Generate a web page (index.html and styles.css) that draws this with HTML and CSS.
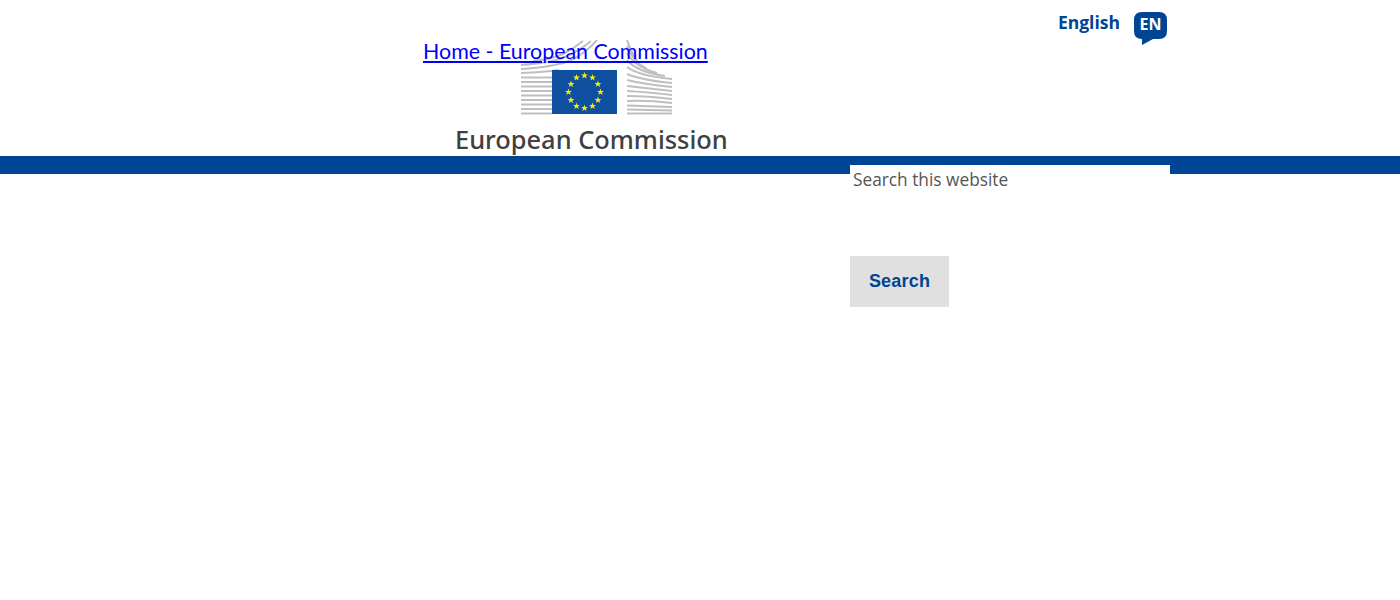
FILE: index.html
```html
<!DOCTYPE html>
<html lang="en">

<head>
    <meta charset="UTF-8">
    <meta name="viewport" content="width=device-width, initial-scale=1.0">
    <title>European Commission</title>
    <link rel="stylesheet" href="styles.css">
</head>

<body>
    <header class="head">
        <div class="brand">
            <a class="homeLink" href="#">Home - European Commission</a>
            <svg class="logo" width="310" height="76" viewBox="0 0 310 76">
                <defs>
                    <polygon id="star" points="0,-3.6 .85,-1.1 3.5,-1.1 1.4,.5 2.2,3 0,1.5 -2.2,3 -1.4,.5 -3.5,-1.1 -.85,-1.1" fill="#ffed00" />
                </defs>
                <g class="lines">
                    <path d="M98 73.500H129M98 69H129M98 64.500H129M98 60H129M98 55.500H129M98 51H129M98 46.500H129M98 42H129M98 37.500H129" />
                    <path d="M98 33Q122 32 136 30M98 29Q130 27 146 21Q162 14 174 0M98 25Q128 23 142 17Q156 11 168 1M110 21Q130 19 140 14Q150 9 160 1" />
                    <path d="M204 73.500H249M204 69.500L249 70.500M204 65.500L249 67M204 61Q225 60 249 63M204 56Q225 56 249 59M204 51Q224 52 249 55M204 46Q222 48 249 51M204 40Q220 44 249 47M204 34Q218 40 249 43M204 27Q216 36 249 39M204 20Q214 32 242 36M204 13Q212 27 234 33M204 6Q210 22 224 29M204 0Q208 12 216 24" />
                </g>
                <rect class="flag" x="129" y="30" width="65" height="44" />
                <use href="#star" x="161.500" y="35.500" />
                <use href="#star" x="169.500" y="37.500" />
                <use href="#star" x="175" y="44" />
                <use href="#star" x="177.500" y="52" />
                <use href="#star" x="175" y="60" />
                <use href="#star" x="169.500" y="66" />
                <use href="#star" x="161.500" y="68" />
                <use href="#star" x="153.500" y="66" />
                <use href="#star" x="148" y="60" />
                <use href="#star" x="145.500" y="52" />
                <use href="#star" x="148" y="44" />
                <use href="#star" x="153.500" y="37.500" />
            </svg>
            <div class="brandName">European Commission</div>
        </div>
        <div class="lang">
            <span class="langName">English</span>
            <svg class="langIcon" width="33" height="33" viewBox="0 0 33 33">
                <path d="M8 0H25Q33 0 33 8V19Q33 27 25 27H19L8 33V27Q0 27 0 19V8Q0 0 8 0Z" fill="#004494" />
                <text x="16.500" y="18" text-anchor="middle">EN</text>
            </svg>
        </div>
    </header>

    <div class="bar"></div>

    <div class="wrap">
        <form class="search">
            <input type="text" class="searchInput" placeholder="Search this website">
            <input type="submit" class="searchBtn" value="Search">
        </form>
    </div>
</body>

</html>
```

FILE: styles.css
```css
body {
    margin: 0;
    background: #fff;
}

.head {
    width: 940px;
    height: 156px;
    margin: 0 auto;
    display: flex;
    justify-content: space-between;
}

.brand {
    position: relative;
    margin-left: 193px;
    padding-top: 40px;
}

.homeLink {
    position: absolute;
    top: 37px;
    left: 0;
    font-family: "Lato", sans-serif;
    font-size: 21.400px;
    line-height: 28px;
    color: #00f;
    white-space: nowrap;
}

.logo {
    display: block;
}

.lines path {
    fill: none;
    stroke: #bfbfbf;
    stroke-width: 2;
}

.flag {
    fill: #0e4f9f;
}

.brandName {
    margin: 7px 0 0 32px;
    font-family: "Noto Sans", sans-serif;
    font-size: 25.400px;
    font-weight: 500;
    line-height: 32px;
    color: #404040;
    white-space: nowrap;
}

.lang {
    display: flex;
    align-items: flex-start;
    gap: 14px;
    padding: 11px 3px 0 0;
}

.langName {
    font-family: "Open Sans", sans-serif;
    font-size: 17.500px;
    font-weight: 700;
    line-height: 22px;
    color: #004494;
}

.langIcon {
    margin-top: 1px;
}

.langIcon text {
    font-family: "Open Sans", sans-serif;
    font-size: 16px;
    font-weight: 700;
    fill: #fff;
}

.bar {
    height: 18px;
    background: #004494;
}

.wrap {
    width: 940px;
    margin: 0 auto;
}

.search {
    width: 320px;
    margin: -9px 0 0 auto;
    display: flex;
    flex-direction: column;
    align-items: flex-start;
    gap: 61px;
}

.searchInput {
    box-sizing: border-box;
    width: 320px;
    height: 30px;
    padding: 0 3px 2px;
    border: none;
    background: #fff;
    font-family: "Open Sans", sans-serif;
    font-size: 17.300px;
    color: #555;
}

.searchInput::placeholder {
    color: #555;
    opacity: 1;
}

.searchBtn {
    width: 99px;
    height: 51px;
    border: none;
    background: #e0e0e0;
    font-family: "Liberation Sans", sans-serif;
    font-size: 18px;
    font-weight: 700;
    letter-spacing: .2px;
    color: #004494;
    cursor: pointer;
}
```
